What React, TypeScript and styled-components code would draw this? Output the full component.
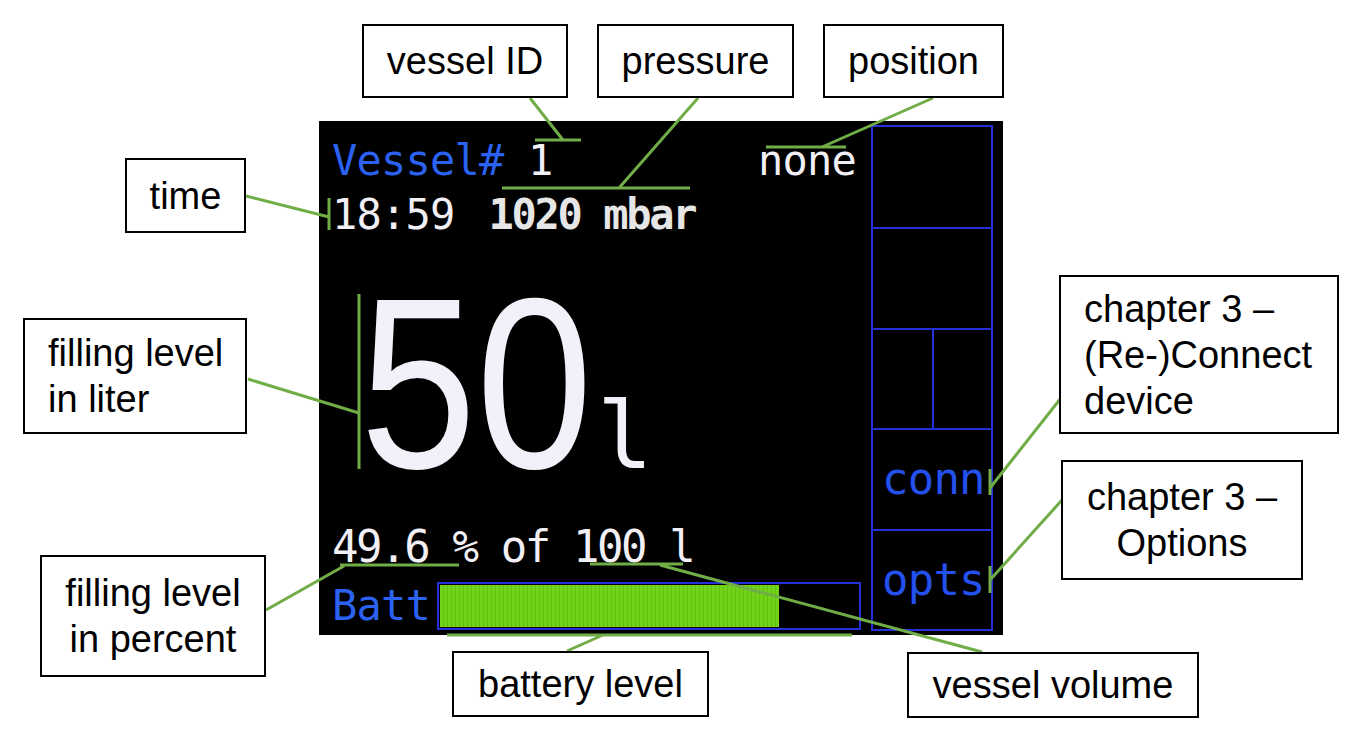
import React from "react";
import styled, { createGlobalStyle } from "styled-components";

const GlobalStyle = createGlobalStyle`
  html, body {
    margin: 0;
    padding: 0;
    background: #fff;
  }
  body {
    font-family: "Liberation Sans", Arial, sans-serif;
  }
`;

const Canvas = styled.div`
  position: relative;
  width: 1361px;
  height: 741px;
  overflow: hidden;
  background: #fff;
  padding: 121px 0 0 319px;
  box-sizing: border-box;
`;

const Screen = styled.div`
  width: 684px;
  height: 514px;
  background: #000;
  display: flex;
  padding: 4px 10px 4px 13px;
  box-sizing: border-box;
  font-family: "DejaVu Sans Mono", "Liberation Mono", monospace;
`;

const Readout = styled.div`
  flex: 1;
  min-width: 0;
  display: flex;
  flex-direction: column;
`;

const TextRow = styled.div<{ $top: number; $size?: number; $spread?: boolean; $tight?: boolean }>`
  display: flex;
  align-items: baseline;
  justify-content: ${(p) => (p.$spread ? "space-between" : "flex-start")};
  padding-right: ${(p) => (p.$spread ? 15 : 0)}px;
  height: 44px;
  line-height: 44px;
  margin-top: ${(p) => p.$top}px;
  font-size: ${(p) => p.$size ?? 42}px;
  letter-spacing: ${(p) => (p.$tight ? -2.4 : -0.8)}px;
  white-space: pre;
  color: #f2f0f6;
`;

const Blue = styled.span`
  color: #2b62f2;
`;

const Bold = styled.span<{ $gap?: number }>`
  font-weight: bold;
  color: #e6e6e6;
  margin-left: ${(p) => p.$gap ?? 0}px;
  letter-spacing: -2.3px;
`;

const BigRow = styled.div`
  display: flex;
  align-items: baseline;
  height: 180px;
  line-height: 180px;
  margin-top: 57px;
  padding-left: 28px;
  color: #f3f0fa;
`;

const BigDigitsBox = styled.div`
  width: 237px;
  flex: none;
`;

const BigDigits = styled.span`
  display: inline-block;
  font-family: "Liberation Sans", Arial, sans-serif;
  font-size: 243px;
  transform: scaleX(0.86);
  transform-origin: left center;
`;

const Unit = styled.span`
  font-size: 93px;
`;

const BattRow = styled.div`
  display: flex;
  align-items: center;
  height: 48px;
  margin-top: 13px;
  font-size: 42px;
  line-height: 48px;
  letter-spacing: -0.8px;
  color: #2b62f2;
`;

const BattBar = styled.div`
  margin-left: 7px;
  width: 424px;
  height: 48px;
  border: 2px solid #2430d8;
  box-sizing: border-box;
  padding: 1px;
  display: flex;
`;

const BattFill = styled.div`
  height: 100%;
  background: repeating-linear-gradient(90deg, #72d418 0 3px, #62c010 3px 4px);
`;

const SidePanel = styled.div`
  width: 122px;
  flex: none;
  border: 2px solid #2430d8;
  box-sizing: border-box;
  display: grid;
  grid-template-rows: repeat(5, 1fr);
`;

const PanelCell = styled.div<{ $first?: boolean }>`
  border-top: ${(p) => (p.$first ? "none" : "2px solid #2430d8")};
  display: flex;
  align-items: center;
  padding-left: 9px;
  font-size: 44px;
  line-height: 44px;
  letter-spacing: -0.8px;
  color: #2450ee;
`;

const SplitCell = styled.div`
  border-top: 2px solid #2430d8;
  display: grid;
  grid-template-columns: 1fr 1fr;
`;

const SplitHalf = styled.div`
  & + & {
    border-left: 2px solid #2430d8;
  }
`;

const Overlay = styled.svg`
  position: absolute;
  left: 0;
  top: 0;
  pointer-events: none;
`;

const Callout = styled.div<{ $x: number; $y: number; $w: number; $h: number; $left?: boolean }>`
  position: absolute;
  left: ${(p) => p.$x}px;
  top: ${(p) => p.$y}px;
  width: ${(p) => p.$w}px;
  height: ${(p) => p.$h}px;
  box-sizing: border-box;
  border: 2px solid #000;
  background: #fff;
  display: flex;
  flex-direction: column;
  justify-content: center;
  align-items: ${(p) => (p.$left ? "flex-start" : "center")};
  padding-left: ${(p) => (p.$left ? 23 : 0)}px;
  font-size: 38px;
  line-height: 46px;
  color: #000;
  text-align: ${(p) => (p.$left ? "left" : "center")};
`;

type Note = { x: number; y: number; w: number; h: number; left?: boolean; lines: string[] };

const notes: Note[] = [
  { x: 362, y: 24, w: 206, h: 74, lines: ["vessel ID"] },
  { x: 597, y: 24, w: 197, h: 74, lines: ["pressure"] },
  { x: 823, y: 24, w: 181, h: 74, lines: ["position"] },
  { x: 125, y: 158, w: 121, h: 75, lines: ["time"] },
  { x: 23, y: 318, w: 224, h: 116, left: true, lines: ["filling level", "in liter"] },
  { x: 40, y: 555, w: 226, h: 122, lines: ["filling level", "in percent"] },
  { x: 452, y: 651, w: 257, h: 66, lines: ["battery level"] },
  { x: 907, y: 652, w: 292, h: 66, lines: ["vessel volume"] },
  { x: 1059, y: 275, w: 280, h: 159, left: true, lines: ["chapter 3 \u2013", "(Re-)Connect", "device"] },
  { x: 1061, y: 460, w: 242, h: 120, lines: ["chapter 3 \u2013", "Options"] },
];

const leaders = [
  "M530 98 L563 140 M535 140 L581 140",
  "M698 98 L619 188 M502 188 L690 188",
  "M933 98 L822 147 M766 147 L846 147",
  "M246 196 L329 217 M329 198 L329 230",
  "M248 379 L359 413 M359 294 L359 469",
  "M266 610 L344 566 M340 565 L459 565",
  "M567 651 L603 635 M447 635 L852 635",
  "M660 565 L982 652 M590 564 L683 564",
  "M1061 398 L990 488 M990 469 L990 495",
  "M1062 500 L990 580 M990 566 L990 593",
];

export default function App() {
  const battery = 81;
  return (
    <Canvas>
      <GlobalStyle />
      <Screen>
        <Readout>
          <TextRow $top={14} $spread>
            <span>
              <Blue>Vessel#</Blue> 1
            </span>
            <span>none</span>
          </TextRow>
          <TextRow $top={10}>
            18:59<Bold $gap={34}>1020 mbar</Bold>
          </TextRow>
          <BigRow>
            <BigDigitsBox>
              <BigDigits>50</BigDigits>
            </BigDigitsBox>
            <Unit>l</Unit>
          </BigRow>
          <TextRow $top={51} $size={44} $tight>
            49.6 % of 100 l
          </TextRow>
          <BattRow>
            Batt
            <BattBar>
              <BattFill style={{ width: `${battery}%` }} />
            </BattBar>
          </BattRow>
        </Readout>
        <SidePanel>
          <PanelCell $first />
          <PanelCell />
          <SplitCell>
            <SplitHalf />
            <SplitHalf />
          </SplitCell>
          <PanelCell>conn</PanelCell>
          <PanelCell>opts</PanelCell>
        </SidePanel>
      </Screen>
      <Overlay width={1361} height={741} viewBox="0 0 1361 741">
        {leaders.map((d) => (
          <path key={d} d={d} stroke="#70ad47" strokeWidth={3} fill="none" />
        ))}
      </Overlay>
      {notes.map((n) => (
        <Callout key={n.lines.join("|")} $x={n.x} $y={n.y} $w={n.w} $h={n.h} $left={n.left}>
          {n.lines.map((l) => (
            <div key={l}>{l}</div>
          ))}
        </Callout>
      ))}
    </Canvas>
  );
}
